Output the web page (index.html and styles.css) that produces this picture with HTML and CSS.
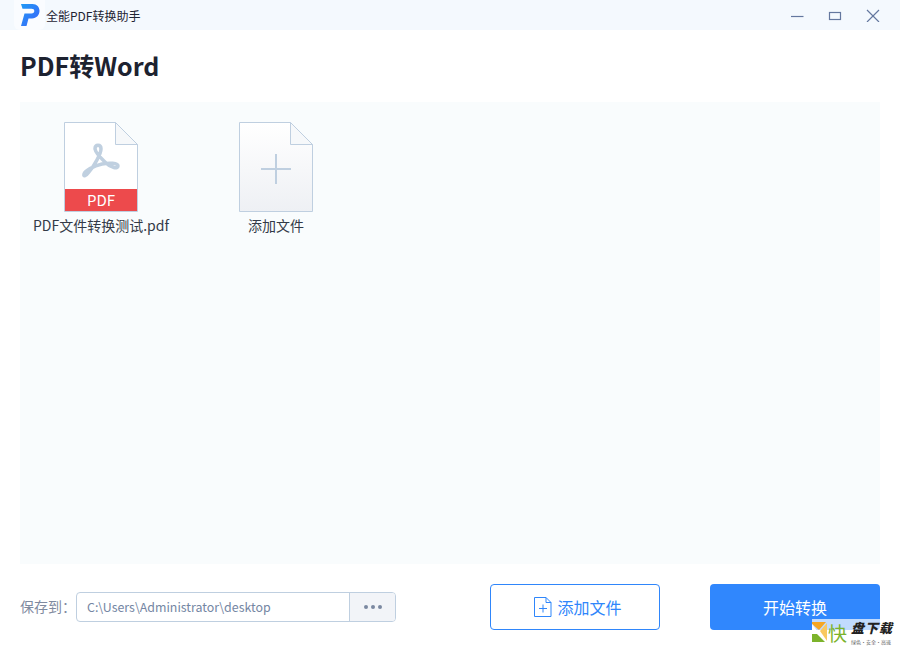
FILE: index.html
```html
<!DOCTYPE html>
<html lang="zh-CN">
<head>
  <meta charset="UTF-8" />
  <title>全能PDF转换助手</title>
  <link rel="stylesheet" href="styles.css">
</head>
<body>
  <div class="app">
    <div class="titlebar">
      <div class="brand">
        <div class="logo-tile">
          <svg width="20" height="22" viewBox="0 0 20 22">
            <defs>
              <linearGradient id="logoGrad" x1="0" y1="0" x2="1" y2="1">
                <stop offset="0" stop-color="#1f9af5"/>
                <stop offset="1" stop-color="#3d63fa"/>
              </linearGradient>
            </defs>
            <path d="M1 0H12.500C17 0 19.500 3 19.500 6.800C19.500 11 16.500 14.500 12 14.500H8.500L6.500 22H1L4.500 9.500H11.500C13.300 9.500 14.300 8.400 14.300 7C14.300 5.600 13.300 4.800 11.500 4.800H2.500Z" fill="url(#logoGrad)"/>
          </svg>
        </div>
        <span class="app-name">全能PDF转换助手</span>
      </div>
      <div class="win-controls">
        <svg width="14" height="14" viewBox="0 0 14 14"><path d="M1 8.500H13.500" class="win-line"/></svg>
        <svg width="14" height="14" viewBox="0 0 14 14"><rect x="1.500" y="4.500" width="11" height="7" class="win-line"/></svg>
        <svg width="14" height="14" viewBox="0 0 14 14"><path d="M1 2L13 14M13 2L1 14" class="win-line"/></svg>
      </div>
    </div>

    <main class="content">
      <h1>PDF转Word</h1>

      <div class="file-panel">
        <div class="file-item">
          <svg class="file-icon" width="74" height="90" viewBox="0 0 74 90">
            <path d="M0.500 0.500H51.500L73.500 22.500V89.500H0.500Z" fill="#fff" stroke="#bfcfe0"/>
            <path d="M51.500 0.500V22.500H73.500Z" fill="#f6f8fa" stroke="#bfcfe0"/>
            <path d="M31 27C31 22 37 22 37 27C37 32 30 44 25 50C22 54 19 55 20 52C21 49 29 44 38 42C45 40.500 54 41 54 44C54 47 47 46 42 41C38 37 32 32 31 27Z" fill="none" stroke="#c0d0e0" stroke-width="3.500"/>
            <rect x="1" y="67" width="72" height="22" fill="#ed4a4c"/>
          </svg>
          <span class="pdf-tag">PDF</span>
          <span class="file-name">PDF文件转换测试.pdf</span>
        </div>

        <div class="file-item">
          <svg class="file-icon" width="74" height="90" viewBox="0 0 74 90">
            <defs>
              <linearGradient id="addGrad" x1="0" y1="0" x2="0" y2="1">
                <stop offset="0" stop-color="#fff"/>
                <stop offset="1" stop-color="#eef0f4"/>
              </linearGradient>
            </defs>
            <path d="M0.500 0.500H51.500L73.500 22.500V89.500H0.500Z" fill="url(#addGrad)" stroke="#bfcfe0"/>
            <path d="M51.500 0.500V22.500H73.500Z" fill="#f6f8fa" stroke="#bfcfe0"/>
            <path d="M37 32V62M22 47H52" stroke="#bfcfe0" stroke-width="2" fill="none"/>
          </svg>
          <span class="file-name">添加文件</span>
        </div>
      </div>

      <div class="footer">
        <div class="save-to">
          <span class="save-label">保存到：</span>
          <div class="path-box">
            <span class="path-text">C:\Users\Administrator\desktop</span>
            <span class="path-more"><i></i><i></i><i></i></span>
          </div>
        </div>
        <div class="actions">
          <button class="btn btn-outline">
            <svg width="18" height="20" viewBox="0 0 18 20">
              <path d="M0.500 0.500H12L17 5.500V19.500H0.500Z M12 0.500V5.500H17 M5 11.500H13 M9 7.500V15.500" fill="none" stroke="#2f86fb"/>
            </svg>
            添加文件
          </button>
          <button class="btn btn-primary">开始转换</button>
        </div>
      </div>
    </main>

    <div class="watermark">
      <svg class="wm-logo" width="15" height="20" viewBox="0 0 15 20">
        <path d="M0 0H14L7 8L0 2Z" fill="#f5a623"/>
        <path d="M0 2L6 10L0 18Z" fill="#fff"/>
        <path d="M0 20V12L5 12L13 20Z" fill="#7cb32b"/>
        <path d="M8 9L15 1V19Z" fill="#f9c860"/>
      </svg>
      <span class="wm-kuai">快</span>
      <div class="wm-text">
        <span class="wm-main">盘下载</span>
        <span class="wm-sub">绿色·安全·高速</span>
      </div>
    </div>
  </div>
</body>
</html>
```

FILE: styles.css
```css
* {
  box-sizing: border-box;
}

body {
  margin: 0;
  background: #fff;
  font-family: "Noto Sans CJK SC", "Noto Sans", sans-serif;
}

.app {
  position: relative;
  width: 900px;
  height: 650px;
  overflow: hidden;
  display: flex;
  flex-direction: column;
}

.titlebar {
  height: 30px;
  flex: none;
  background: #f4f9fe;
  display: flex;
  justify-content: space-between;
  align-items: center;
}

.brand {
  display: flex;
  align-items: center;
  height: 30px;
  padding-left: 14px;
}

.logo-tile {
  width: 31px;
  height: 30px;
  background: #fafcff;
  border-radius: 0 0 6px 6px;
  display: flex;
  align-items: center;
  padding-left: 6px;
}

.app-name {
  font-size: 12px;
  color: #1f2433;
  margin-left: 1px;
}

.win-controls {
  display: flex;
  gap: 24px;
  padding-right: 20px;
}

.win-line {
  fill: none;
  stroke: #64789f;
  stroke-width: 1.2;
}

.content {
  flex: 1;
  padding: 0 20px 20px;
  display: flex;
  flex-direction: column;
}

h1 {
  margin: 0 0 2px;
  height: 70px;
  line-height: 70px;
  font-size: 25px;
  font-weight: 700;
  color: #1d2230;
}

.file-panel {
  height: 462px;
  background: #f9fcfd;
  display: flex;
  align-items: flex-start;
  gap: 13px;
  padding-top: 20px;
}

.file-item {
  position: relative;
  width: 162px;
  display: flex;
  flex-direction: column;
  align-items: center;
  color: #333a47;
  font-size: 14px;
}

.file-icon {
  display: block;
  margin-bottom: 3px;
}

.pdf-tag {
  position: absolute;
  top: 68px;
  left: 0;
  width: 100%;
  text-align: center;
  color: #fff;
  font-size: 15px;
  line-height: 20px;
}

.file-name {
  line-height: 20px;
}

.footer {
  margin-top: 20px;
  height: 46px;
  display: flex;
  justify-content: space-between;
  align-items: center;
}

.save-to {
  display: flex;
  align-items: center;
}

.save-label {
  width: 56px;
  padding-bottom: 2px;
  font-size: 14px;
  color: #7f8aa0;
}

.path-box {
  width: 320px;
  height: 30px;
  border: 1px solid #bfcfe0;
  border-radius: 4px;
  display: flex;
  align-items: center;
  overflow: hidden;
}

.path-text {
  flex: 1;
  padding-left: 10px;
  padding-bottom: 1px;
  font-size: 12.400px;
  color: #7486a3;
}

.path-more {
  width: 46px;
  height: 100%;
  background: #f2f4f8;
  border-left: 1px solid #bfcfe0;
  display: flex;
  align-items: center;
  justify-content: center;
  gap: 3px;
}

.path-more i {
  width: 4px;
  height: 4px;
  border-radius: 50%;
  background: #7b88a1;
}

.actions {
  display: flex;
  gap: 50px;
}

.btn {
  width: 170px;
  height: 46px;
  padding: 0;
  border-radius: 4px;
  font-family: inherit;
  font-size: 16px;
  display: flex;
  align-items: center;
  justify-content: center;
  gap: 5px;
}

.btn-outline {
  background: #fff;
  border: 1px solid #2f86fb;
  color: #2f86fb;
  padding-left: 6px;
}

.btn-primary {
  background: #3087fd;
  border: none;
  color: #fff;
}

.watermark {
  position: absolute;
  right: 0;
  bottom: 0;
  width: 88px;
  height: 31px;
  background: linear-gradient(to right, rgba(255, 255, 255, 0.7) 68px, #fff 68px);
  display: flex;
  align-items: flex-start;
  padding-top: 3px;
}

.wm-logo {
  flex: none;
}

.wm-kuai {
  font-size: 19px;
  line-height: 21px;
  color: #7cb32b;
  margin-left: 1px;
}

.wm-text {
  display: flex;
  flex-direction: column;
  margin-left: 4px;
  margin-top: -1px;
  width: 44px;
}

.wm-main {
  font-size: 13px;
  line-height: 14px;
  letter-spacing: 1px;
  font-weight: 900;
  font-style: italic;
  color: #222;
  white-space: nowrap;
}

.wm-sub {
  margin-top: 3px;
  font-size: 5px;
  line-height: 7px;
  color: #666;
  white-space: nowrap;
}
```
